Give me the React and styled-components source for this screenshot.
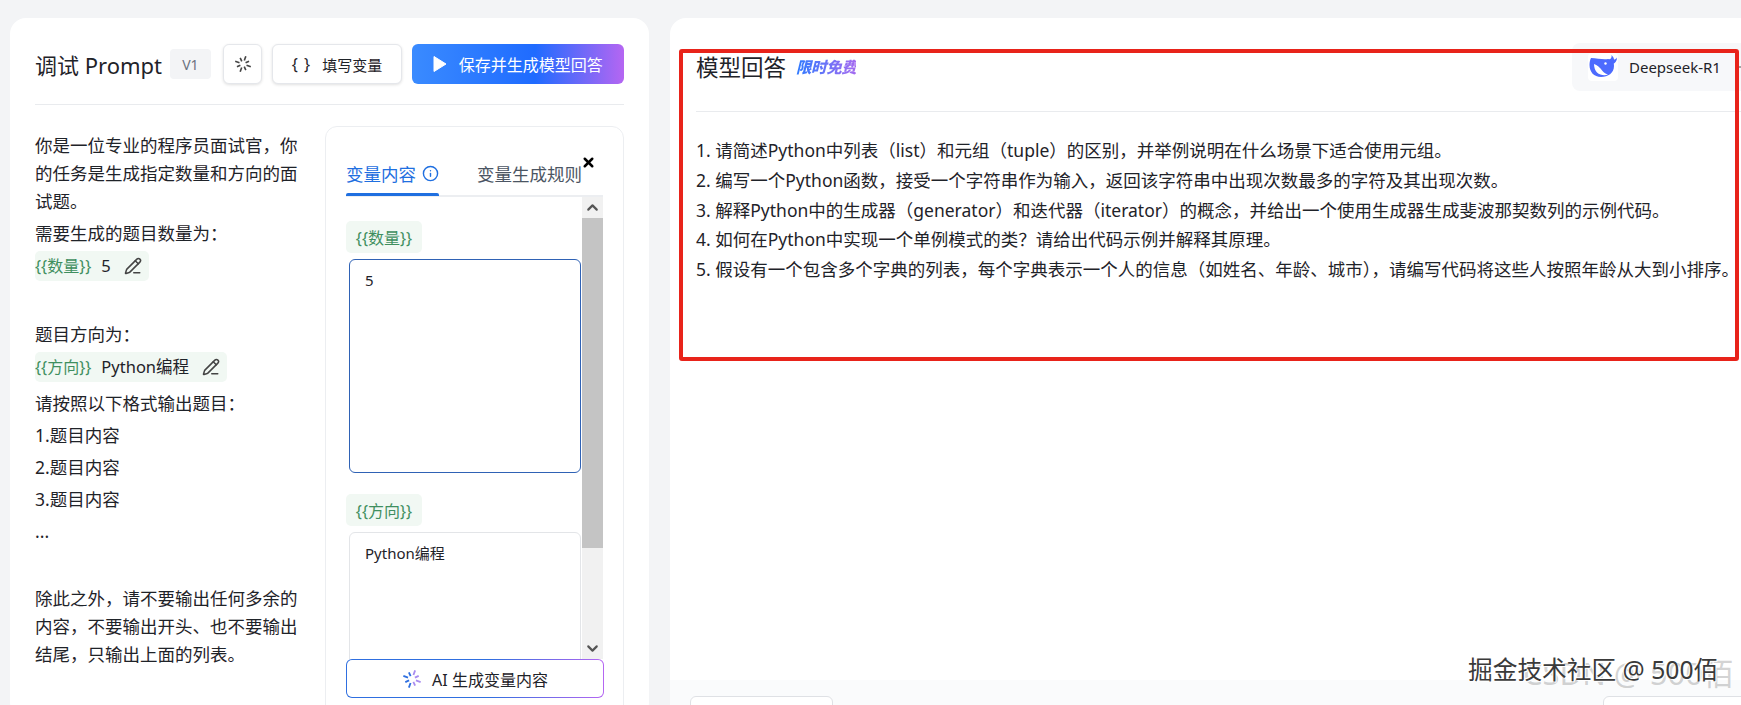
import React from 'react';
import styled, { createGlobalStyle } from 'styled-components';
import { ChevronDown, ChevronUp, Info, PencilLine, Plus, X } from 'lucide-react';

const GlobalStyle = createGlobalStyle`
  html, body {
    margin: 0;
    padding: 0;
    background: #f3f4f6;
  }
  body {
    font-family: "Noto Sans", "Noto Sans CJK SC", sans-serif;
    color: #1f2329;
  }
  * {
    box-sizing: border-box;
  }
`;

const Page = styled.div`
  position: relative;
  display: flex;
  gap: 21px;
  width: 1741px;
  height: 705px;
  padding: 18px 0 0 10px;
  overflow: hidden;
`;

const Card = styled.section`
  flex: none;
  height: 700px;
  background: #fff;
  border-radius: 16px;
  overflow: hidden;
`;

const LeftCard = styled(Card)`
  width: 639px;
  padding: 26px 25px 0 25px;
`;

const RightCard = styled(Card)`
  display: flex;
  flex-direction: column;
  width: 1100px;
  padding-top: 25px;
`;

const Header = styled.header`
  display: flex;
  align-items: center;
  height: 61px;
  padding-bottom: 20px;
  border-bottom: 1px solid #e9ebee;
`;

const Title = styled.h1`
  margin: 0;
  font-size: 22px;
  font-weight: 400;
  white-space: nowrap;
`;

const AnswerHeading = styled(Title)`
  font-size: 22.5px;
`;

const VersionTag = styled.span`
  display: flex;
  align-items: center;
  justify-content: center;
  width: 41px;
  height: 30px;
  margin-left: 8px;
  background: #f3f4f6;
  border-radius: 4px;
  color: #6b7280;
  font-size: 14px;
`;

const Button = styled.button`
  display: flex;
  align-items: center;
  justify-content: center;
  gap: 12px;
  height: 40px;
  padding: 0;
  background: #fff;
  border: 1px solid #e5e7eb;
  border-radius: 6px;
  box-shadow: 0 1px 3px rgba(0, 0, 0, 0.12);
  color: #1f2329;
  font-family: inherit;
  font-size: 15px;
`;

const IconButton = styled(Button)`
  width: 40px;
  margin-left: 12px;
`;

const VarButton = styled(Button)`
  width: 130px;
  margin-left: 10px;
`;

const Braces = styled.span`
  font-size: 16px;
  word-spacing: 2px;
`;

const SaveButton = styled(Button)`
  width: 214px;
  margin-left: 10px;
  border: none;
  box-shadow: none;
  background: linear-gradient(90deg, #3a8bff 0%, #1f6bff 58%, #b566f2 100%);
  color: #fff;
  font-size: 16px;
`;

const Columns = styled.div`
  display: grid;
  grid-template-columns: 264px 299px;
  gap: 26px;
  margin-top: 21px;
`;

const Prompt = styled.div`
  padding-top: 5px;
  font-size: 17.5px;
  line-height: 28px;
`;

const Para = styled.p`
  margin: 0 0 ${p => p.$after || 4}px;
`;

const Blank = styled.div`
  height: ${p => p.$size}px;
`;

const VarChip = styled.div`
  display: inline-flex;
  align-items: center;
  height: 30px;
  margin-bottom: ${p => p.$after || 4}px;
  background: #f1f8f3;
  border-radius: 5px;
  font-size: 16.5px;
  vertical-align: top;
`;

const VarName = styled.span`
  margin-right: 10px;
  color: #3f8f5f;
  font-size: 16px;
`;

const EditIcon = styled(PencilLine)`
  margin-left: 13px;
  margin-right: 7px;
  color: #444;
`;

const Panel = styled.div`
  height: 640px;
  padding: 0 20px 0 20px;
  border: 1px solid #eceef1;
  border-radius: 12px;
`;

const Tabs = styled.div`
  position: relative;
  display: flex;
  gap: 38px;
  height: 70px;
  padding-top: 27px;
  border-bottom: 2px solid #eceef1;
`;

const Tab = styled.div`
  position: relative;
  display: flex;
  align-items: center;
  gap: 6px;
  height: 41px;
  padding-bottom: 3px;
  font-size: 17.5px;
  white-space: nowrap;
  color: ${p => (p.$active ? '#1f6fe0' : '#4b5563')};

  ${p => p.$active && `
    &::after {
      content: "";
      position: absolute;
      left: 0;
      right: 0;
      bottom: -1px;
      height: 3px;
      background: #1f6fe0;
      border-radius: 2px 2px 0 0;
    }
  `}
`;

const CloseMark = styled(X)`
  position: absolute;
  top: 28px;
  right: 7px;
  color: #000;
`;

const ScrollArea = styled.div`
  display: flex;
  height: 462px;
`;

const Fields = styled.div`
  flex: 1;
  min-width: 0;
  overflow: hidden;
  padding-top: 24px;
`;

const Label = styled.div`
  display: flex;
  align-items: center;
  justify-content: center;
  width: 76px;
  height: 32px;
  background: #f1f8f3;
  border-radius: 5px;
  color: #3f8f5f;
  font-size: 16px;
`;

const ValueBox = styled.div`
  width: 232px;
  height: ${p => p.$height}px;
  margin: 6px 0 21px 3px;
  padding: 9px 15px;
  border: 1px solid ${p => (p.$focus ? '#2f62b5' : '#e3e5e8')};
  border-radius: 6px;
  font-size: 15px;
  line-height: 22px;
`;

const Scrollbar = styled.div`
  display: flex;
  flex-direction: column;
  flex: none;
  width: 21px;
  background: #f1f1f1;
`;

const ScrollArrow = styled.div`
  display: flex;
  align-items: center;
  justify-content: center;
  height: 21px;
  color: #555;
`;

const ScrollThumb = styled.div`
  height: 330px;
  background: #c4c4c4;
`;

const ScrollRest = styled.div`
  flex: 1;
`;

const AiButton = styled.button`
  display: flex;
  align-items: center;
  justify-content: center;
  gap: 10px;
  width: 258px;
  height: 39px;
  padding: 0;
  border: 1px solid transparent;
  border-radius: 6px;
  background:
    linear-gradient(#fff, #fff) padding-box,
    linear-gradient(90deg, #2f6fe0 0%, #2f6fe0 55%, #b566f2 100%) border-box;
  color: #1f2329;
  font-family: inherit;
  font-size: 16px;
`;

const AnswerHeader = styled(Header)`
  height: 69px;
  margin-left: 26px;
  justify-content: space-between;
  align-items: flex-start;
`;

const AnswerTitle = styled.div`
  display: flex;
  align-items: center;
  gap: 10px;
  height: 47px;
`;

const FreeTag = styled.span`
  font-size: 15.5px;
  font-style: italic;
  font-weight: 900;
  letter-spacing: -0.4px;
  background: linear-gradient(90deg, #2f7bff, #a56bf0);
  -webkit-background-clip: text;
  background-clip: text;
  color: transparent;
`;

const ModelPill = styled.div`
  display: flex;
  align-items: center;
  width: 198px;
  height: 48px;
  padding-left: 16px;
  background: #f7f8fa;
  border-radius: 8px;
  font-size: 15px;
  white-space: nowrap;
`;

const ModelLogo = styled.span`
  display: flex;
  align-items: center;
  justify-content: center;
  width: 30px;
  height: 28px;
  margin-right: 11px;
  background: #fff;
  border-radius: 4px;
`;

const MoreIcon = styled(Plus)`
  margin-left: 13px;
  color: #888;
`;

const Answer = styled.div`
  flex: 1;
  padding: 24px 0 0 26px;
  font-size: 17.5px;
  line-height: 29.8px;
  white-space: nowrap;
`;

const Footer = styled.footer`
  display: flex;
  justify-content: space-between;
  flex: none;
  height: 38px;
  padding: 16px 0 0 20px;
  background: #fafbfc;
`;

const FooterBox = styled.div`
  width: ${p => p.$width}px;
  height: 40px;
  background: #fff;
  border: 1px solid #dfe1e5;
  border-radius: 6px;
`;

const Highlight = styled.div`
  position: absolute;
  left: 679px;
  top: 49px;
  width: 1060px;
  height: 312px;
  border: 4px solid #e8231a;
  border-radius: 3px;
  pointer-events: none;
`;

const Watermark = styled.div`
  position: absolute;
  left: 1468px;
  top: 653px;
  color: #3a3a3a;
  font-size: 24.7px;
  line-height: 34px;
  white-space: nowrap;
  text-shadow: 1px 1px 0 #fff, -1px -1px 0 #fff;
`;

const GhostMark = styled.div`
  position: absolute;
  left: 1523px;
  top: 654px;
  color: rgba(130, 130, 130, 0.35);
  font-size: 31px;
  line-height: 38px;
  white-space: nowrap;
`;

const rays = [0, 45, 90, 135, 180, 225, 270, 315];

const Sparkle = ({ size = 18, gradient }) => (
  <svg width={size} height={size} viewBox="0 0 20 20" fill="none">
    {rays.map((deg, i) => (
      <line
        key={deg}
        x1="10"
        y1={i % 2 ? 6.8 : 5.8}
        x2="10"
        y2={i % 2 ? 2.6 : 0.8}
        transform={`rotate(${deg + 20} 10 10)`}
        stroke={gradient ? (i < 4 ? '#a98cf0' : '#2f6fe0') : '#444'}
        strokeWidth="1.8"
      />
    ))}
  </svg>
);

const PlayIcon = () => (
  <svg width="14" height="18" viewBox="0 0 14 18">
    <path d="M1 1.5 13 9 1 16.5z" fill="#fff" stroke="#fff" strokeLinejoin="round" />
  </svg>
);

const WhaleLogo = () => (
  <svg width="30" height="26" viewBox="0 0 30 26">
    <path fill="#4d6bfe" d="M3 4C9 4 15 6 20 5C24 5 26 8 26 12C26 19 20 23 13 23C6 23 1.500 18 1.500 11C1.500 8 2 6 3 4Z" />
    <path fill="#4d6bfe" d="M21 6C23 5 24 3 23.500 1C25 2.500 26 4 26 5.500C27 5.500 28 5 29 3.500C29 6.500 27.500 9 25 10Z" />
    <path fill="#fff" d="M6 10C9 11 12 13.500 14.500 17C16 19 18 20 20 20.500C17 22 12 21.300 9 18.500C7 16.500 6 13 6 10Z" />
    <circle cx="17.500" cy="9.500" r="1.200" fill="#fff" />
  </svg>
);

const answers = [
  '1. 请简述Python中列表（list）和元组（tuple）的区别，并举例说明在什么场景下适合使用元组。',
  '2. 编写一个Python函数，接受一个字符串作为输入，返回该字符串中出现次数最多的字符及其出现次数。',
  '3. 解释Python中的生成器（generator）和迭代器（iterator）的概念，并给出一个使用生成器生成斐波那契数列的示例代码。',
  '4. 如何在Python中实现一个单例模式的类？请给出代码示例并解释其原理。',
  '5. 假设有一个包含多个字典的列表，每个字典表示一个人的信息（如姓名、年龄、城市），请编写代码将这些人按照年龄从大到小排序。',
];

export default function App() {
  return (
    <>
      <GlobalStyle />
      <Page>
        <LeftCard>
          <Header>
            <Title>调试 Prompt</Title>
            <VersionTag>V1</VersionTag>
            <IconButton><Sparkle /></IconButton>
            <VarButton><Braces>{'{ }'}</Braces>填写变量</VarButton>
            <SaveButton><PlayIcon />保存并生成模型回答</SaveButton>
          </Header>
          <Columns>
            <Prompt>
              <Para>你是一位专业的程序员面试官，你的任务是生成指定数量和方向的面试题。</Para>
              <Para>需要生成的题目数量为：</Para>
              <VarChip>
                <VarName>{'{{数量}}'}</VarName>5
                <EditIcon size={18} />
              </VarChip>
              <Blank $size={35} />
              <Para>题目方向为：</Para>
              <VarChip $after={7}>
                <VarName>{'{{方向}}'}</VarName>Python编程
                <EditIcon size={18} />
              </VarChip>
              <Para>请按照以下格式输出题目：</Para>
              <Para>1.题目内容</Para>
              <Para>2.题目内容</Para>
              <Para>3.题目内容</Para>
              <Para>...</Para>
              <Blank $size={35} />
              <Para>除此之外，请不要输出任何多余的内容，不要输出开头、也不要输出结尾，只输出上面的列表。</Para>
            </Prompt>
            <Panel>
              <Tabs>
                <Tab $active>变量内容<Info size={17} /></Tab>
                <Tab>变量生成规则</Tab>
                <CloseMark size={15} strokeWidth={4} />
              </Tabs>
              <ScrollArea>
                <Fields>
                  <Label>{'{{数量}}'}</Label>
                  <ValueBox $focus $height={214}>5</ValueBox>
                  <Label>{'{{方向}}'}</Label>
                  <ValueBox $height={214}>Python编程</ValueBox>
                </Fields>
                <Scrollbar>
                  <ScrollArrow><ChevronUp size={17} strokeWidth={3} /></ScrollArrow>
                  <ScrollThumb />
                  <ScrollRest />
                  <ScrollArrow><ChevronDown size={17} strokeWidth={3} /></ScrollArrow>
                </Scrollbar>
              </ScrollArea>
              <AiButton><Sparkle size={20} gradient />AI 生成变量内容</AiButton>
            </Panel>
          </Columns>
        </LeftCard>
        <RightCard>
          <AnswerHeader>
            <AnswerTitle>
              <AnswerHeading>模型回答</AnswerHeading>
              <FreeTag>限时免费</FreeTag>
            </AnswerTitle>
            <ModelPill>
              <ModelLogo><WhaleLogo /></ModelLogo>
              Deepseek-R1
              <MoreIcon size={16} />
            </ModelPill>
          </AnswerHeader>
          <Answer>
            {answers.map(line => <div key={line}>{line}</div>)}
          </Answer>
          <Footer>
            <FooterBox $width={143} />
            <FooterBox $width={167} />
          </Footer>
        </RightCard>
        <Highlight />
        <GhostMark>CSDN @ 500佰</GhostMark>
        <Watermark>掘金技术社区 @ 500佰</Watermark>
      </Page>
    </>
  );
}
